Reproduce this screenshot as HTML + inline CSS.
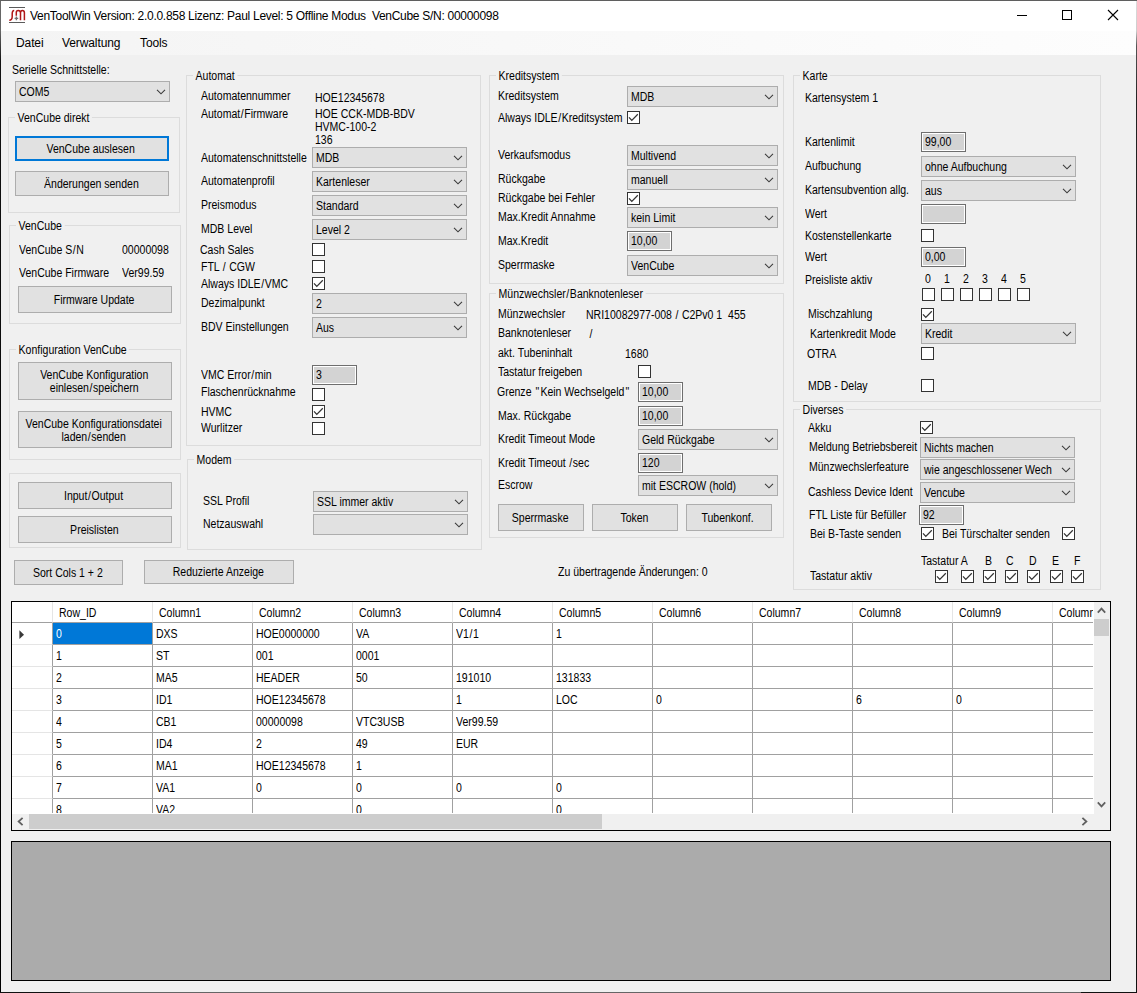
<!DOCTYPE html>
<html lang="de"><head><meta charset="utf-8"><title>VenToolWin</title>
<style>
html,body{margin:0;padding:0}
body{width:1137px;height:993px;overflow:hidden;background:#f0f0f0;font-family:"Liberation Sans",sans-serif;font-size:12.3px;line-height:13px;color:#000;position:relative}
#win{position:absolute;left:0;top:0;width:1137px;height:993px;overflow:hidden;background:#f0f0f0}
#win>div,#win>svg{position:absolute}
#edgeT{left:0;top:0;width:1137px;height:1px;background:#5f5f5f}
#edgeL{left:0;top:1px;width:1px;height:992px;background:linear-gradient(#666 0,#666 30px,#111 60px,#000 100%)}
#edgeR{left:1136px;top:1px;width:1px;height:992px;background:linear-gradient(#ddd 0,#ccc 30px,#555 45px,#222 100px,#111 100%)}
#edgeB{left:0;top:992px;width:1137px;height:1px;background:linear-gradient(90deg,#111 0,#111 70px,#666 70px,#666 1081px,#111 1081px)}
#title{left:1px;top:1px;width:1135px;height:30px;background:#fff}
#ico{left:8px;top:7px}
#ttext{left:30px;top:9px;font-size:12px;line-height:15px;letter-spacing:-0.29px;white-space:pre}
#wctl{left:1017px;top:9px}
#menu{left:1px;top:31px;width:1135px;height:24px;background:linear-gradient(90deg,#f4f4f4,#fdfdfd)}
#menu span{position:absolute;top:5px;font-size:12px;line-height:15px;letter-spacing:-0.1px}
i{font-style:normal;display:inline-block;width:4.8px;text-align:center}
i.q{width:7px}
.l{white-space:pre;height:13px;transform:scaleX(.855);transform-origin:0 0}
.cb{box-sizing:border-box;border:1px solid #adadad;background:#e1e1e1}
.cb span{position:absolute;left:3px;top:4px;white-space:pre;transform:scaleX(.855);transform-origin:0 0}
.cb .ch{position:absolute;right:3px;top:7px}
.tb{box-sizing:border-box;border:1px solid #6e6e6e;background:#d3d3d3;box-shadow:inset 0 0 0 1px #fff}
.tb span{position:absolute;left:2.5px;top:3px;white-space:pre;transform:scaleX(.855);transform-origin:0 0}
.ck{box-sizing:border-box;width:13px;height:13px;border:1px solid #333;background:#fff}
.ck svg{position:absolute;left:0;top:0}
.bt{box-sizing:border-box;border:1px solid #adadad;background:#e1e1e1;display:flex;align-items:center;justify-content:center;text-align:center}
.bt.f{border:2px solid #0078d7}
.bt span{display:inline-block;left:-1px;white-space:pre;transform:scaleX(.855);transform-origin:50% 50%}
.gb{box-sizing:border-box;border:1px solid #dcdcdc}
.gb .gl{position:absolute;top:-6px;background:#f0f0f0;padding:0 3px 0 3px;white-space:pre;height:13px;transform:scaleX(.855);transform-origin:0 0}
#grid{left:11px;top:601px;width:1100px;height:230px;box-sizing:border-box;border:1px solid #000;background:#fff}
#gc{position:absolute;left:0;top:0;width:1081px;height:211px;overflow:hidden;background:#fff}
#gc>div{position:absolute;box-sizing:border-box}
.hr{left:0;top:0;width:1200px;height:21px;border-bottom:1px solid #a0a0a0}
.rh0{left:0;top:0;width:41px;height:21px;border-right:1px solid #e5e5e5;border-bottom:1px solid #a0a0a0}
.hc{top:0;width:100px;height:21px;border-right:1px solid #e5e5e5;border-bottom:1px solid #a0a0a0}
.hc span{position:absolute;left:6px;top:5px;white-space:pre;transform:scaleX(.855);transform-origin:0 0}
.rh{left:0;width:41px;height:22px;border-right:1px solid #a0a0a0;border-bottom:1px solid #e5e5e5}
.c{width:100px;height:22px;border-right:1px solid #a0a0a0;border-bottom:1px solid #a0a0a0}
.c span{position:absolute;left:3px;top:5px;white-space:pre;transform:scaleX(.855);transform-origin:0 0}
.c.sel{background:#0078d7;color:#fff}
#rowarrow{position:absolute;left:7px;top:28px}
#vs{position:absolute;left:1082px;top:0;width:16px;height:212px;background:#f0f0f0}
#vs .th{position:absolute;left:0;top:17px;width:15px;height:17px;background:#cdcdcd}
#vs .au{position:absolute;left:3px;top:5px}
#vs .ad{position:absolute;left:3px;top:199px}
#hs{position:absolute;left:0;top:212px;width:1098px;height:16px;background:#f0f0f0}
#hs .th{position:absolute;left:17px;top:0;width:573px;height:15px;background:#cdcdcd}
#hs .al{position:absolute;left:5px;top:3px}
#hs .ar{position:absolute;left:1069px;top:3px}
#panel{left:11px;top:841px;width:1100px;height:140px;box-sizing:border-box;border:1px solid #000;background:#ababab}
</style></head>
<body><div id="win">
<div id="edgeT"></div><div id="edgeL"></div><div id="edgeR"></div><div id="edgeB"></div>
<div id="title"></div>
<svg id="ico" width="18" height="18" viewBox="0 0 18 18">
<rect x="1" y="0" width="16" height="1" fill="#5a5a5a"/><rect x="1" y="15" width="16" height="1" fill="#5a5a5a"/>
<path d="M1.3 13.2 C3.6 13.2 4.2 12 4.2 9.5 L4.2 6.5 C4.2 4.3 4.9 3.4 6.2 3.4" fill="none" stroke="#b01818" stroke-width="1.5"/>
<path d="M8.3 8.8 L8.3 5.6 C8.3 4.2 9 3.5 10.2 3.5 C11.5 3.5 12.5 4.3 12.5 5.8 L12.5 13.2 M12.5 5.8 C12.5 4.2 13.2 3.5 14.4 3.5 C15.7 3.5 16.4 4.3 16.4 5.8 L16.4 13.2" fill="none" stroke="#b01818" stroke-width="1.5"/>
<path d="M8.4 9.6 L8.4 13.2 M6.6 11.4 L10.2 11.4" fill="none" stroke="#707070" stroke-width="1.4"/>
</svg>
<div id="ttext">VenToolWin Version: 2.0.0.858 Lizenz: Paul Level: 5 Offline Modus&nbsp; VenCube S/N: 00000098</div>
<svg id="wctl" width="110" height="14" viewBox="0 0 110 14">
<path d="M0 6.5 H10" stroke="#000" stroke-width="1" fill="none"/>
<rect x="45.5" y="1.5" width="9" height="9" stroke="#000" stroke-width="1" fill="none"/>
<path d="M91 1 L101 11 M101 1 L91 11" stroke="#000" stroke-width="1.1" fill="none"/>
</svg>
<div id="menu"><span style="left:15px">Datei</span><span style="left:61px">Verwaltung</span><span style="left:139px">Tools</span></div>
<div class="l " style="left:12px;top:64px">Serielle Schnittstelle:</div>
<div class="cb" style="left:15px;top:81px;width:155px;height:21px"><span>COM5</span><svg class="ch" width="10" height="6" viewBox="0 0 10 6"><path d="M1 0.8 L5 4.8 L9 0.8" fill="none" stroke="#3c3c3c" stroke-width="1.1"/></svg></div>
<div class="gb" style="left:8px;top:117px;width:172px;height:96px"><span class="gl" style="left:5.6px">VenCube direkt</span></div>
<div class="bt f" style="left:15px;top:136px;width:154px;height:25px"><span style="position:relative;top:1px">VenCube auslesen</span></div>
<div class="bt" style="left:15px;top:171px;width:154px;height:25px"><span style="position:relative;top:1px">Änderungen senden</span></div>
<div class="gb" style="left:9px;top:225px;width:172px;height:99px"><span class="gl" style="left:5.6px">VenCube</span></div>
<div class="l " style="left:19px;top:244px">VenCube S<i>/</i>N</div>
<div class="l " style="left:122px;top:244px">00000098</div>
<div class="l " style="left:19px;top:267px">VenCube Firmware</div>
<div class="l " style="left:122px;top:267px">Ver99.59</div>
<div class="bt" style="left:18px;top:286px;width:154px;height:27px"><span style="position:relative;top:1px">Firmware Update</span></div>
<div class="gb" style="left:9px;top:349px;width:172px;height:111px"><span class="gl" style="left:5.6px">Konfiguration VenCube</span></div>
<div class="bt" style="left:18px;top:362px;width:154px;height:38px"><span style="position:relative;top:1px">VenCube Konfiguration<br>einlesen<i>/</i>speichern</span></div>
<div class="bt" style="left:18px;top:411px;width:154px;height:37px"><span style="position:relative;top:1px">VenCube Konfigurationsdatei<br>laden<i>/</i>senden</span></div>
<div class="gb" style="left:9px;top:473px;width:172px;height:75px"></div>
<div class="bt" style="left:18px;top:482px;width:154px;height:27px"><span style="position:relative;top:1px">Input<i>/</i>Output</span></div>
<div class="bt" style="left:18px;top:516px;width:154px;height:27px"><span style="position:relative;top:1px">Preislisten</span></div>
<div class="bt" style="left:14px;top:560px;width:109px;height:25px"><span style="position:relative;top:1px">Sort Cols 1 + 2</span></div>
<div class="bt" style="left:144px;top:560px;width:150px;height:24px"><span style="position:relative;top:0px">Reduzierte Anzeige</span></div>
<div class="gb" style="left:186px;top:75px;width:295px;height:371px"><span class="gl" style="left:5.6px">Automat</span></div>
<div class="l " style="left:201px;top:90px">Automatennummer</div>
<div class="l " style="left:315px;top:92px">HOE12345678</div>
<div class="l " style="left:201px;top:108px">Automat<i>/</i>Firmware</div>
<div class="l " style="left:315px;top:108px">HOE CCK-MDB-BDV</div>
<div class="l " style="left:315px;top:121px">HVMC-100-2</div>
<div class="l " style="left:315px;top:134px">136</div>
<div class="l " style="left:201px;top:152px">Automatenschnittstelle</div>
<div class="cb" style="left:312px;top:147px;width:155px;height:21px"><span>MDB</span><svg class="ch" width="10" height="6" viewBox="0 0 10 6"><path d="M1 0.8 L5 4.8 L9 0.8" fill="none" stroke="#3c3c3c" stroke-width="1.1"/></svg></div>
<div class="l " style="left:201px;top:175px">Automatenprofil</div>
<div class="cb" style="left:312px;top:171px;width:155px;height:21px"><span>Kartenleser</span><svg class="ch" width="10" height="6" viewBox="0 0 10 6"><path d="M1 0.8 L5 4.8 L9 0.8" fill="none" stroke="#3c3c3c" stroke-width="1.1"/></svg></div>
<div class="l " style="left:201px;top:199px">Preismodus</div>
<div class="cb" style="left:312px;top:195px;width:155px;height:21px"><span>Standard</span><svg class="ch" width="10" height="6" viewBox="0 0 10 6"><path d="M1 0.8 L5 4.8 L9 0.8" fill="none" stroke="#3c3c3c" stroke-width="1.1"/></svg></div>
<div class="l " style="left:201px;top:223px">MDB Level</div>
<div class="cb" style="left:312px;top:219px;width:155px;height:21px"><span>Level 2</span><svg class="ch" width="10" height="6" viewBox="0 0 10 6"><path d="M1 0.8 L5 4.8 L9 0.8" fill="none" stroke="#3c3c3c" stroke-width="1.1"/></svg></div>
<div class="l " style="left:200px;top:244px">Cash Sales</div>
<div class="ck" style="left:312px;top:243px"></div>
<div class="l " style="left:201px;top:261px">FTL <i>/</i> CGW</div>
<div class="ck" style="left:312px;top:260px"></div>
<div class="l " style="left:201px;top:278px">Always IDLE<i>/</i>VMC</div>
<div class="ck" style="left:312px;top:277px"><svg width="11" height="11" viewBox="0 0 11 11"><path d="M1 5.3 L3.8 8.4 L9.8 2.3" fill="none" stroke="#333" stroke-width="1.25"/></svg></div>
<div class="l " style="left:201px;top:297px">Dezimalpunkt</div>
<div class="cb" style="left:312px;top:293px;width:155px;height:21px"><span>2</span><svg class="ch" width="10" height="6" viewBox="0 0 10 6"><path d="M1 0.8 L5 4.8 L9 0.8" fill="none" stroke="#3c3c3c" stroke-width="1.1"/></svg></div>
<div class="l " style="left:201px;top:321px">BDV Einstellungen</div>
<div class="cb" style="left:312px;top:317px;width:155px;height:21px"><span>Aus</span><svg class="ch" width="10" height="6" viewBox="0 0 10 6"><path d="M1 0.8 L5 4.8 L9 0.8" fill="none" stroke="#3c3c3c" stroke-width="1.1"/></svg></div>
<div class="l " style="left:201px;top:369px">VMC Error<i>/</i>min</div>
<div class="tb" style="left:312px;top:365px;width:45px;height:20px"><span>3</span></div>
<div class="l " style="left:201px;top:386px">Flaschenrücknahme</div>
<div class="ck" style="left:312px;top:388px"></div>
<div class="l " style="left:201px;top:406px">HVMC</div>
<div class="ck" style="left:312px;top:405px"><svg width="11" height="11" viewBox="0 0 11 11"><path d="M1 5.3 L3.8 8.4 L9.8 2.3" fill="none" stroke="#333" stroke-width="1.25"/></svg></div>
<div class="l " style="left:201px;top:422px">Wurlitzer</div>
<div class="ck" style="left:312px;top:422px"></div>
<div class="gb" style="left:187px;top:459px;width:295px;height:91px"><span class="gl" style="left:5.6px">Modem</span></div>
<div class="l " style="left:203px;top:495px">SSL Profil</div>
<div class="cb" style="left:313px;top:491px;width:155px;height:21px"><span>SSL immer aktiv</span><svg class="ch" width="10" height="6" viewBox="0 0 10 6"><path d="M1 0.8 L5 4.8 L9 0.8" fill="none" stroke="#3c3c3c" stroke-width="1.1"/></svg></div>
<div class="l " style="left:203px;top:518px">Netzauswahl</div>
<div class="cb" style="left:313px;top:514px;width:155px;height:21px"><span></span><svg class="ch" width="10" height="6" viewBox="0 0 10 6"><path d="M1 0.8 L5 4.8 L9 0.8" fill="none" stroke="#3c3c3c" stroke-width="1.1"/></svg></div>
<div class="gb" style="left:489px;top:75px;width:295px;height:209px"><span class="gl" style="left:5.6px">Kreditsystem</span></div>
<div class="l " style="left:498px;top:90px">Kreditsystem</div>
<div class="cb" style="left:627px;top:86px;width:151px;height:21px"><span>MDB</span><svg class="ch" width="10" height="6" viewBox="0 0 10 6"><path d="M1 0.8 L5 4.8 L9 0.8" fill="none" stroke="#3c3c3c" stroke-width="1.1"/></svg></div>
<div class="l " style="left:498px;top:112px">Always IDLE<i>/</i>Kreditsystem</div>
<div class="ck" style="left:627px;top:111px"><svg width="11" height="11" viewBox="0 0 11 11"><path d="M1 5.3 L3.8 8.4 L9.8 2.3" fill="none" stroke="#333" stroke-width="1.25"/></svg></div>
<div class="l " style="left:498px;top:149px">Verkaufsmodus</div>
<div class="cb" style="left:627px;top:145px;width:151px;height:21px"><span>Multivend</span><svg class="ch" width="10" height="6" viewBox="0 0 10 6"><path d="M1 0.8 L5 4.8 L9 0.8" fill="none" stroke="#3c3c3c" stroke-width="1.1"/></svg></div>
<div class="l " style="left:498px;top:173px">Rückgabe</div>
<div class="cb" style="left:627px;top:169px;width:151px;height:21px"><span>manuell</span><svg class="ch" width="10" height="6" viewBox="0 0 10 6"><path d="M1 0.8 L5 4.8 L9 0.8" fill="none" stroke="#3c3c3c" stroke-width="1.1"/></svg></div>
<div class="l " style="left:498px;top:192px">Rückgabe bei Fehler</div>
<div class="ck" style="left:627px;top:192px"><svg width="11" height="11" viewBox="0 0 11 11"><path d="M1 5.3 L3.8 8.4 L9.8 2.3" fill="none" stroke="#333" stroke-width="1.25"/></svg></div>
<div class="l " style="left:498px;top:211px">Max.Kredit Annahme</div>
<div class="cb" style="left:627px;top:207px;width:151px;height:21px"><span>kein Limit</span><svg class="ch" width="10" height="6" viewBox="0 0 10 6"><path d="M1 0.8 L5 4.8 L9 0.8" fill="none" stroke="#3c3c3c" stroke-width="1.1"/></svg></div>
<div class="l " style="left:498px;top:235px">Max.Kredit</div>
<div class="tb" style="left:627px;top:231px;width:45px;height:20px"><span>10,00</span></div>
<div class="l " style="left:498px;top:259px">Sperrmaske</div>
<div class="cb" style="left:627px;top:255px;width:151px;height:21px"><span>VenCube</span><svg class="ch" width="10" height="6" viewBox="0 0 10 6"><path d="M1 0.8 L5 4.8 L9 0.8" fill="none" stroke="#3c3c3c" stroke-width="1.1"/></svg></div>
<div class="gb" style="left:489px;top:293px;width:295px;height:245px"><span class="gl" style="left:5.6px">Münzwechsler<i>/</i>Banknotenleser</span></div>
<div class="l " style="left:498px;top:308px">Münzwechsler</div>
<div class="l " style="left:586px;top:309px">NRI10082977-008 <i>/</i> C2Pv0 1  455</div>
<div class="l " style="left:498px;top:327px">Banknotenleser</div>
<div class="l " style="left:589px;top:328px"><i>/</i></div>
<div class="l " style="left:498px;top:347px">akt. Tubeninhalt</div>
<div class="l " style="left:625px;top:348px">1680</div>
<div class="l " style="left:498px;top:366px">Tastatur freigeben</div>
<div class="ck" style="left:638px;top:365px"></div>
<div class="l " style="left:497px;top:386px">Grenze <i class="q">"</i>Kein Wechselgeld<i class="q">"</i></div>
<div class="tb" style="left:638px;top:382px;width:45px;height:20px"><span>10,00</span></div>
<div class="l " style="left:498px;top:410px">Max. Rückgabe</div>
<div class="tb" style="left:638px;top:406px;width:45px;height:20px"><span>10,00</span></div>
<div class="l " style="left:498px;top:433px">Kredit Timeout Mode</div>
<div class="cb" style="left:638px;top:429px;width:140px;height:21px"><span>Geld Rückgabe</span><svg class="ch" width="10" height="6" viewBox="0 0 10 6"><path d="M1 0.8 L5 4.8 L9 0.8" fill="none" stroke="#3c3c3c" stroke-width="1.1"/></svg></div>
<div class="l " style="left:498px;top:457px">Kredit Timeout <i>/</i>sec</div>
<div class="tb" style="left:638px;top:453px;width:45px;height:20px"><span>120</span></div>
<div class="l " style="left:498px;top:479px">Escrow</div>
<div class="cb" style="left:638px;top:475px;width:140px;height:21px"><span>mit ESCROW (hold)</span><svg class="ch" width="10" height="6" viewBox="0 0 10 6"><path d="M1 0.8 L5 4.8 L9 0.8" fill="none" stroke="#3c3c3c" stroke-width="1.1"/></svg></div>
<div class="bt" style="left:498px;top:504px;width:86px;height:27px"><span style="position:relative;top:1px">Sperrmaske</span></div>
<div class="bt" style="left:592px;top:504px;width:86px;height:27px"><span style="position:relative;top:1px">Token</span></div>
<div class="bt" style="left:686px;top:504px;width:86px;height:27px"><span style="position:relative;top:1px">Tubenkonf.</span></div>
<div class="l " style="left:558px;top:566px">Zu übertragende Änderungen: 0</div>
<div class="gb" style="left:793px;top:75px;width:308px;height:327px"><span class="gl" style="left:5.6px">Karte</span></div>
<div class="l " style="left:805px;top:92px">Kartensystem 1</div>
<div class="l " style="left:805px;top:136px">Kartenlimit</div>
<div class="tb" style="left:921px;top:132px;width:45px;height:20px"><span>99,00</span></div>
<div class="l " style="left:805px;top:160px">Aufbuchung</div>
<div class="cb" style="left:921px;top:156px;width:155px;height:21px"><span>ohne Aufbuchung</span><svg class="ch" width="10" height="6" viewBox="0 0 10 6"><path d="M1 0.8 L5 4.8 L9 0.8" fill="none" stroke="#3c3c3c" stroke-width="1.1"/></svg></div>
<div class="l " style="left:805px;top:184px">Kartensubvention allg.</div>
<div class="cb" style="left:921px;top:180px;width:155px;height:21px"><span>aus</span><svg class="ch" width="10" height="6" viewBox="0 0 10 6"><path d="M1 0.8 L5 4.8 L9 0.8" fill="none" stroke="#3c3c3c" stroke-width="1.1"/></svg></div>
<div class="l " style="left:805px;top:208px">Wert</div>
<div class="tb" style="left:921px;top:204px;width:45px;height:20px"><span></span></div>
<div class="l " style="left:805px;top:230px">Kostenstellenkarte</div>
<div class="ck" style="left:921px;top:229px"></div>
<div class="l " style="left:805px;top:251px">Wert</div>
<div class="tb" style="left:921px;top:247px;width:45px;height:20px"><span>0,00</span></div>
<div class="l " style="left:805px;top:274px">Preisliste aktiv</div>
<div class="l " style="left:925px;top:273px">0</div>
<div class="ck" style="left:922px;top:288px"></div>
<div class="l " style="left:944px;top:273px">1</div>
<div class="ck" style="left:941px;top:288px"></div>
<div class="l " style="left:963px;top:273px">2</div>
<div class="ck" style="left:960px;top:288px"></div>
<div class="l " style="left:982px;top:273px">3</div>
<div class="ck" style="left:979px;top:288px"></div>
<div class="l " style="left:1001px;top:273px">4</div>
<div class="ck" style="left:998px;top:288px"></div>
<div class="l " style="left:1020px;top:273px">5</div>
<div class="ck" style="left:1017px;top:288px"></div>
<div class="l " style="left:808px;top:308px">Mischzahlung</div>
<div class="ck" style="left:921px;top:308px"><svg width="11" height="11" viewBox="0 0 11 11"><path d="M1 5.3 L3.8 8.4 L9.8 2.3" fill="none" stroke="#333" stroke-width="1.25"/></svg></div>
<div class="l " style="left:810px;top:328px">Kartenkredit Mode</div>
<div class="cb" style="left:921px;top:323px;width:155px;height:21px"><span>Kredit</span><svg class="ch" width="10" height="6" viewBox="0 0 10 6"><path d="M1 0.8 L5 4.8 L9 0.8" fill="none" stroke="#3c3c3c" stroke-width="1.1"/></svg></div>
<div class="l " style="left:807px;top:348px">OTRA</div>
<div class="ck" style="left:921px;top:347px"></div>
<div class="l " style="left:808px;top:380px">MDB - Delay</div>
<div class="ck" style="left:921px;top:379px"></div>
<div class="gb" style="left:793px;top:409px;width:308px;height:181px"><span class="gl" style="left:5.6px">Diverses</span></div>
<div class="l " style="left:808px;top:422px">Akku</div>
<div class="ck" style="left:920px;top:421px"><svg width="11" height="11" viewBox="0 0 11 11"><path d="M1 5.3 L3.8 8.4 L9.8 2.3" fill="none" stroke="#333" stroke-width="1.25"/></svg></div>
<div class="l " style="left:809px;top:441px">Meldung Betriebsbereit</div>
<div class="cb" style="left:920px;top:437px;width:155px;height:21px"><span>Nichts machen</span><svg class="ch" width="10" height="6" viewBox="0 0 10 6"><path d="M1 0.8 L5 4.8 L9 0.8" fill="none" stroke="#3c3c3c" stroke-width="1.1"/></svg></div>
<div class="l " style="left:809px;top:461px">Münzwechslerfeature</div>
<div class="cb" style="left:920px;top:459px;width:155px;height:21px"><span>wie angeschlossener Wech</span><svg class="ch" width="10" height="6" viewBox="0 0 10 6"><path d="M1 0.8 L5 4.8 L9 0.8" fill="none" stroke="#3c3c3c" stroke-width="1.1"/></svg></div>
<div class="l " style="left:808px;top:486px">Cashless Device Ident</div>
<div class="cb" style="left:920px;top:482px;width:155px;height:21px"><span>Vencube</span><svg class="ch" width="10" height="6" viewBox="0 0 10 6"><path d="M1 0.8 L5 4.8 L9 0.8" fill="none" stroke="#3c3c3c" stroke-width="1.1"/></svg></div>
<div class="l " style="left:809px;top:509px">FTL Liste für Befüller</div>
<div class="tb" style="left:919px;top:505px;width:45px;height:20px"><span>92</span></div>
<div class="l " style="left:810px;top:528px">Bei B-Taste senden</div>
<div class="ck" style="left:921px;top:527px"><svg width="11" height="11" viewBox="0 0 11 11"><path d="M1 5.3 L3.8 8.4 L9.8 2.3" fill="none" stroke="#333" stroke-width="1.25"/></svg></div>
<div class="l " style="left:942px;top:528px">Bei Türschalter senden</div>
<div class="ck" style="left:1062px;top:527px"><svg width="11" height="11" viewBox="0 0 11 11"><path d="M1 5.3 L3.8 8.4 L9.8 2.3" fill="none" stroke="#333" stroke-width="1.25"/></svg></div>
<div class="l " style="left:921px;top:555px">Tastatur A</div>
<div class="l " style="left:985px;top:555px">B</div>
<div class="l " style="left:1006px;top:555px">C</div>
<div class="l " style="left:1029px;top:555px">D</div>
<div class="l " style="left:1052px;top:555px">E</div>
<div class="l " style="left:1074px;top:555px">F</div>
<div class="l " style="left:810px;top:570px">Tastatur aktiv</div>
<div class="ck" style="left:935px;top:570px"><svg width="11" height="11" viewBox="0 0 11 11"><path d="M1 5.3 L3.8 8.4 L9.8 2.3" fill="none" stroke="#333" stroke-width="1.25"/></svg></div>
<div class="ck" style="left:961px;top:570px"><svg width="11" height="11" viewBox="0 0 11 11"><path d="M1 5.3 L3.8 8.4 L9.8 2.3" fill="none" stroke="#333" stroke-width="1.25"/></svg></div>
<div class="ck" style="left:983px;top:570px"><svg width="11" height="11" viewBox="0 0 11 11"><path d="M1 5.3 L3.8 8.4 L9.8 2.3" fill="none" stroke="#333" stroke-width="1.25"/></svg></div>
<div class="ck" style="left:1005px;top:570px"><svg width="11" height="11" viewBox="0 0 11 11"><path d="M1 5.3 L3.8 8.4 L9.8 2.3" fill="none" stroke="#333" stroke-width="1.25"/></svg></div>
<div class="ck" style="left:1027px;top:570px"><svg width="11" height="11" viewBox="0 0 11 11"><path d="M1 5.3 L3.8 8.4 L9.8 2.3" fill="none" stroke="#333" stroke-width="1.25"/></svg></div>
<div class="ck" style="left:1050px;top:570px"><svg width="11" height="11" viewBox="0 0 11 11"><path d="M1 5.3 L3.8 8.4 L9.8 2.3" fill="none" stroke="#333" stroke-width="1.25"/></svg></div>
<div class="ck" style="left:1071px;top:570px"><svg width="11" height="11" viewBox="0 0 11 11"><path d="M1 5.3 L3.8 8.4 L9.8 2.3" fill="none" stroke="#333" stroke-width="1.25"/></svg></div>
<div id="grid"><div id="gc">
<div class="hr"></div>
<div class="rh0"></div>
<div class="hc" style="left:41px"><span>Row_ID</span></div>
<div class="hc" style="left:141px"><span>Column1</span></div>
<div class="hc" style="left:241px"><span>Column2</span></div>
<div class="hc" style="left:341px"><span>Column3</span></div>
<div class="hc" style="left:441px"><span>Column4</span></div>
<div class="hc" style="left:541px"><span>Column5</span></div>
<div class="hc" style="left:641px"><span>Column6</span></div>
<div class="hc" style="left:741px"><span>Column7</span></div>
<div class="hc" style="left:841px"><span>Column8</span></div>
<div class="hc" style="left:941px"><span>Column9</span></div>
<div class="hc" style="left:1041px"><span>Column10</span></div>
<div class="rh" style="top:21px"></div>
<div class="c sel" style="left:41px;top:21px"><span>0</span></div>
<div class="c" style="left:141px;top:21px"><span>DXS</span></div>
<div class="c" style="left:241px;top:21px"><span>HOE0000000</span></div>
<div class="c" style="left:341px;top:21px"><span>VA</span></div>
<div class="c" style="left:441px;top:21px"><span>V1<i>/</i>1</span></div>
<div class="c" style="left:541px;top:21px"><span>1</span></div>
<div class="c" style="left:641px;top:21px"><span></span></div>
<div class="c" style="left:741px;top:21px"><span></span></div>
<div class="c" style="left:841px;top:21px"><span></span></div>
<div class="c" style="left:941px;top:21px"><span></span></div>
<div class="c" style="left:1041px;top:21px"><span></span></div>
<div class="rh" style="top:43px"></div>
<div class="c" style="left:41px;top:43px"><span>1</span></div>
<div class="c" style="left:141px;top:43px"><span>ST</span></div>
<div class="c" style="left:241px;top:43px"><span>001</span></div>
<div class="c" style="left:341px;top:43px"><span>0001</span></div>
<div class="c" style="left:441px;top:43px"><span></span></div>
<div class="c" style="left:541px;top:43px"><span></span></div>
<div class="c" style="left:641px;top:43px"><span></span></div>
<div class="c" style="left:741px;top:43px"><span></span></div>
<div class="c" style="left:841px;top:43px"><span></span></div>
<div class="c" style="left:941px;top:43px"><span></span></div>
<div class="c" style="left:1041px;top:43px"><span></span></div>
<div class="rh" style="top:65px"></div>
<div class="c" style="left:41px;top:65px"><span>2</span></div>
<div class="c" style="left:141px;top:65px"><span>MA5</span></div>
<div class="c" style="left:241px;top:65px"><span>HEADER</span></div>
<div class="c" style="left:341px;top:65px"><span>50</span></div>
<div class="c" style="left:441px;top:65px"><span>191010</span></div>
<div class="c" style="left:541px;top:65px"><span>131833</span></div>
<div class="c" style="left:641px;top:65px"><span></span></div>
<div class="c" style="left:741px;top:65px"><span></span></div>
<div class="c" style="left:841px;top:65px"><span></span></div>
<div class="c" style="left:941px;top:65px"><span></span></div>
<div class="c" style="left:1041px;top:65px"><span></span></div>
<div class="rh" style="top:87px"></div>
<div class="c" style="left:41px;top:87px"><span>3</span></div>
<div class="c" style="left:141px;top:87px"><span>ID1</span></div>
<div class="c" style="left:241px;top:87px"><span>HOE12345678</span></div>
<div class="c" style="left:341px;top:87px"><span></span></div>
<div class="c" style="left:441px;top:87px"><span>1</span></div>
<div class="c" style="left:541px;top:87px"><span>LOC</span></div>
<div class="c" style="left:641px;top:87px"><span>0</span></div>
<div class="c" style="left:741px;top:87px"><span></span></div>
<div class="c" style="left:841px;top:87px"><span>6</span></div>
<div class="c" style="left:941px;top:87px"><span>0</span></div>
<div class="c" style="left:1041px;top:87px"><span></span></div>
<div class="rh" style="top:109px"></div>
<div class="c" style="left:41px;top:109px"><span>4</span></div>
<div class="c" style="left:141px;top:109px"><span>CB1</span></div>
<div class="c" style="left:241px;top:109px"><span>00000098</span></div>
<div class="c" style="left:341px;top:109px"><span>VTC3USB</span></div>
<div class="c" style="left:441px;top:109px"><span>Ver99.59</span></div>
<div class="c" style="left:541px;top:109px"><span></span></div>
<div class="c" style="left:641px;top:109px"><span></span></div>
<div class="c" style="left:741px;top:109px"><span></span></div>
<div class="c" style="left:841px;top:109px"><span></span></div>
<div class="c" style="left:941px;top:109px"><span></span></div>
<div class="c" style="left:1041px;top:109px"><span></span></div>
<div class="rh" style="top:131px"></div>
<div class="c" style="left:41px;top:131px"><span>5</span></div>
<div class="c" style="left:141px;top:131px"><span>ID4</span></div>
<div class="c" style="left:241px;top:131px"><span>2</span></div>
<div class="c" style="left:341px;top:131px"><span>49</span></div>
<div class="c" style="left:441px;top:131px"><span>EUR</span></div>
<div class="c" style="left:541px;top:131px"><span></span></div>
<div class="c" style="left:641px;top:131px"><span></span></div>
<div class="c" style="left:741px;top:131px"><span></span></div>
<div class="c" style="left:841px;top:131px"><span></span></div>
<div class="c" style="left:941px;top:131px"><span></span></div>
<div class="c" style="left:1041px;top:131px"><span></span></div>
<div class="rh" style="top:153px"></div>
<div class="c" style="left:41px;top:153px"><span>6</span></div>
<div class="c" style="left:141px;top:153px"><span>MA1</span></div>
<div class="c" style="left:241px;top:153px"><span>HOE12345678</span></div>
<div class="c" style="left:341px;top:153px"><span>1</span></div>
<div class="c" style="left:441px;top:153px"><span></span></div>
<div class="c" style="left:541px;top:153px"><span></span></div>
<div class="c" style="left:641px;top:153px"><span></span></div>
<div class="c" style="left:741px;top:153px"><span></span></div>
<div class="c" style="left:841px;top:153px"><span></span></div>
<div class="c" style="left:941px;top:153px"><span></span></div>
<div class="c" style="left:1041px;top:153px"><span></span></div>
<div class="rh" style="top:175px"></div>
<div class="c" style="left:41px;top:175px"><span>7</span></div>
<div class="c" style="left:141px;top:175px"><span>VA1</span></div>
<div class="c" style="left:241px;top:175px"><span>0</span></div>
<div class="c" style="left:341px;top:175px"><span>0</span></div>
<div class="c" style="left:441px;top:175px"><span>0</span></div>
<div class="c" style="left:541px;top:175px"><span>0</span></div>
<div class="c" style="left:641px;top:175px"><span></span></div>
<div class="c" style="left:741px;top:175px"><span></span></div>
<div class="c" style="left:841px;top:175px"><span></span></div>
<div class="c" style="left:941px;top:175px"><span></span></div>
<div class="c" style="left:1041px;top:175px"><span></span></div>
<div class="rh" style="top:197px"></div>
<div class="c" style="left:41px;top:197px"><span>8</span></div>
<div class="c" style="left:141px;top:197px"><span>VA2</span></div>
<div class="c" style="left:241px;top:197px"><span></span></div>
<div class="c" style="left:341px;top:197px"><span>0</span></div>
<div class="c" style="left:441px;top:197px"><span></span></div>
<div class="c" style="left:541px;top:197px"><span>0</span></div>
<div class="c" style="left:641px;top:197px"><span></span></div>
<div class="c" style="left:741px;top:197px"><span></span></div>
<div class="c" style="left:841px;top:197px"><span></span></div>
<div class="c" style="left:941px;top:197px"><span></span></div>
<div class="c" style="left:1041px;top:197px"><span></span></div>
<svg id="rowarrow" width="6" height="10" viewBox="0 0 6 10"><path d="M0.4 0.3 L5 4.7 L0.4 9.1 Z" fill="#3a3a3a"/></svg>
</div>
<div id="vs"><div class="th"></div><svg class="au" width="9" height="7" viewBox="0 0 9 7"><path d="M0.8 5.6 L4.5 1.6 L8.2 5.6" fill="none" stroke="#606060" stroke-width="1.8"/></svg><svg class="ad" width="9" height="7" viewBox="0 0 9 7"><path d="M0.8 1.4 L4.5 5.4 L8.2 1.4" fill="none" stroke="#606060" stroke-width="1.8"/></svg></div>
<div id="hs"><div class="th"></div><svg class="al" width="7" height="9" viewBox="0 0 7 9"><path d="M5.6 0.8 L1.6 4.5 L5.6 8.2" fill="none" stroke="#606060" stroke-width="1.8"/></svg><svg class="ar" width="7" height="9" viewBox="0 0 7 9"><path d="M1.4 0.8 L5.4 4.5 L1.4 8.2" fill="none" stroke="#606060" stroke-width="1.8"/></svg></div>
</div>
<div id="panel"></div>
</div></body></html>
